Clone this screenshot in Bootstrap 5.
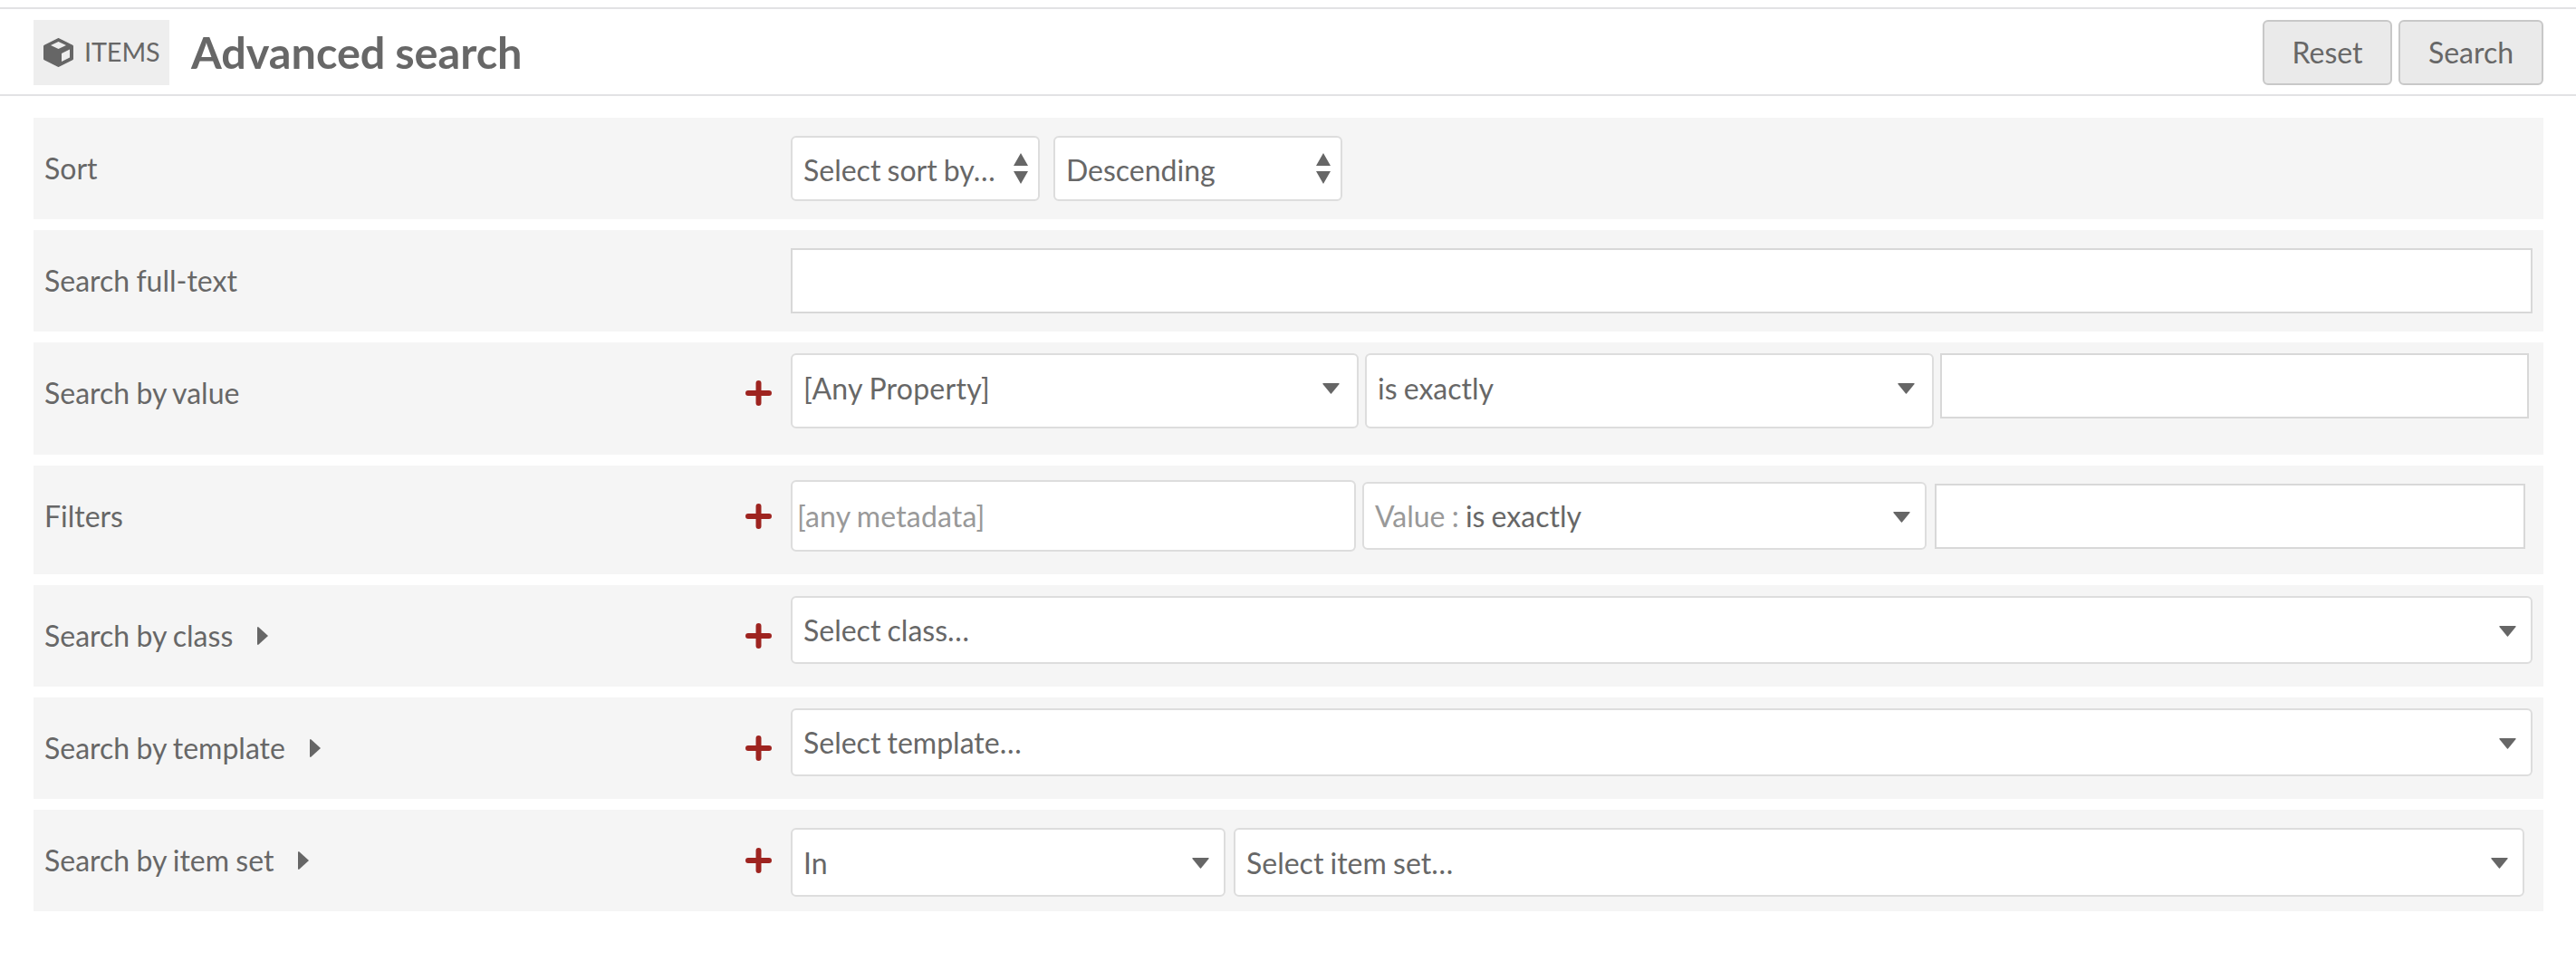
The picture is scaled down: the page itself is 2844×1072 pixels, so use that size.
<!DOCTYPE html>
<html lang="en"><head><meta charset="utf-8"><title>Advanced search</title>
<link href="https://cdn.jsdelivr.net/npm/bootstrap@5.3.0/dist/css/bootstrap.min.css" rel="stylesheet">
<style>
:root{--ink:#676767;--sel:url("data:image/svg+xml,%3Csvg xmlns='http://www.w3.org/2000/svg' viewBox='0 0 19 12'%3E%3Cpath d='M1 0h17q1 0 .6 1L10 11.500q-.5.500-1 0L.4 1Q0 0 1 0z' fill='%23666'/%3E%3C/svg%3E");--ud:url("data:image/svg+xml,%3Csvg xmlns='http://www.w3.org/2000/svg' viewBox='0 0 16 34'%3E%3Cpath d='M8 0l8 14H0zM0 20h16L8 34z' fill='%23666'/%3E%3C/svg%3E")}
html,body{background:#fff}
body{font-family:Lato,"Liberation Sans",sans-serif;font-size:32px;color:var(--ink);padding-top:8px;min-height:1072px;overflow:hidden;word-spacing:-1px}
.headbar{border-top:2px solid #e2e2e4;border-bottom:2px solid #e2e2e4;height:98px;padding:12px 36px 0 37px}
.crumb{height:72px;width:150px;background:#eee;font-size:28.800px;padding-left:11px;gap:12px}
.crumb span{margin-left:0;letter-spacing:-.1px}
.pagetitle{font-size:48.600px;font-weight:700;margin:0 0 0 24px;color:var(--ink);line-height:70px}
.actbtn{height:72px;background:#eaeaea;border:2px solid #c8c8c8;border-radius:6px;color:var(--ink);padding:0;font-size:32px;line-height:68px}
.actbtn:hover{background:#e2e2e2;color:var(--ink);border-color:#c8c8c8}
.w-reset{width:143px}.w-search{width:160px;margin-left:7px}
.rowlist{margin:24px 36px 0 37px;gap:12px}
.srow{background:#f5f5f5;height:112px;padding-left:12px}
.srow.tall-a{height:124px}.srow.tall-b{height:120px}
.rowhead{width:824px;flex:none;height:100%;padding-right:21px}
.rowhead.up-6{padding-bottom:12px}
.rowhead.up-4{padding-bottom:8px}
.tri{margin-left:27px;flex:none}
.plusmark{margin-left:auto;flex:none}
.fbox{border:2px solid #ddd;border-radius:6px;background-color:#fff;color:var(--ink);font-size:32px;box-shadow:none;font-family:inherit;line-height:normal;word-spacing:-1px}
.form-select.fbox{background-size:19px 12px;background-position:right 16px top 31px;background-image:var(--sel);padding:0 40px 0 12px;border-color:#ddd;color:var(--ink)}
.form-select.updn{background-image:var(--ud);background-size:16px 34px;background-position:right 11px center;height:72px;padding-top:2px}
.form-control.plain{border-radius:0;border-color:#d8d8d8;height:72px;padding:0 12px}
.form-control.lookup{padding:0 5px;height:79px;width:624px;flex:none;letter-spacing:.15px}
.lookup::placeholder{color:#999;opacity:1}
.mutedtxt{color:#999}
.w-sort{width:275px;flex:none}.w-dir{width:319px;flex:none;margin-left:15px}
.w-full{width:1923px;flex:none}
.form-select.fbox.w-prop,.form-select.fbox.w-op{background-position:right 19px top 31px;padding-bottom:6px}
.w-prop{width:627px;height:83px;flex:none;letter-spacing:.25px}
.w-op{width:628px;height:83px;flex:none;margin-left:7px}
.w-val{width:650px;flex:none;margin-left:7px}
.ctl-top{padding-top:12px}
.ctl-f{padding-top:16px}
.ctl-s{padding-top:12px}
.ctl-i{padding-top:20px}
.w-fop{width:623px;height:75px;flex:none;margin:2px 0 0 7px;line-height:71px}
.w-fval{width:652px;flex:none;margin:4px 0 0 9px}
.w-wide{width:1923px;height:75px;flex:none}
.w-in{width:480px;height:76px;flex:none}
.w-set{width:1425px;height:76px;flex:none;margin-left:9px}
</style></head><body>
<header class="headbar d-flex align-items-start">
 <div class="crumb d-flex align-items-center">
  <svg width="33" height="32" viewBox="0 0 33 32"><path d="M16.500 1.500L31.500 9v14L16.500 30.500 1.500 23V9z" fill="#666" stroke="#666" stroke-width="3" stroke-linejoin="round"/><path d="M8 8l8.500-4L25 8l-8.500 4z" fill="#eee"/><path d="M20 17l9-4.500v9L20 26z" fill="#eee"/></svg>
  <span>ITEMS</span>
 </div>
 <h1 class="pagetitle">Advanced search</h1>
 <div class="ms-auto d-flex">
  <button type="button" class="btn actbtn w-reset">Reset</button>
  <button type="button" class="btn actbtn w-search">Search</button>
 </div>
</header>
<main class="rowlist d-flex flex-column">

 <section class="srow d-flex">
  <div class="rowhead d-flex align-items-center"><span>Sort</span></div>
  <div class="d-flex align-items-center">
   <select class="form-select fbox updn w-sort"><option>Select sort by…</option></select>
   <select class="form-select fbox updn w-dir"><option>Descending</option></select>
  </div>
 </section>

 <section class="srow d-flex">
  <div class="rowhead d-flex align-items-center"><span>Search full-text</span></div>
  <div class="d-flex align-items-center"><input type="text" class="form-control fbox plain w-full" aria-label="Search full-text"></div>
 </section>

 <section class="srow tall-a d-flex">
  <div class="rowhead up-6 d-flex align-items-center"><span>Search by value</span>
   <svg class="plusmark" width="29" height="28" viewBox="0 0 29 28"><path d="M14.500 3v22M3 14h23" stroke="#9e2420" stroke-width="6" stroke-linecap="round"/></svg></div>
  <div class="d-flex align-items-start ctl-top">
   <select class="form-select fbox w-prop"><option>[Any Property]</option></select>
   <select class="form-select fbox w-op"><option>is exactly</option></select>
   <input type="text" class="form-control fbox plain w-val" aria-label="Value">
  </div>
 </section>

 <section class="srow tall-b d-flex">
  <div class="rowhead up-4 d-flex align-items-center"><span>Filters</span>
   <svg class="plusmark" width="29" height="28" viewBox="0 0 29 28"><path d="M14.500 3v22M3 14h23" stroke="#9e2420" stroke-width="6" stroke-linecap="round"/></svg></div>
  <div class="d-flex align-items-start ctl-f">
   <input type="text" class="form-control fbox lookup" placeholder="[any metadata]" aria-label="Metadata">
   <div class="form-select fbox w-fop"><span class="mutedtxt">Value : </span>is exactly</div>
   <input type="text" class="form-control fbox plain w-fval" aria-label="Filter value">
  </div>
 </section>

 <section class="srow d-flex">
  <div class="rowhead d-flex align-items-center"><span>Search by class</span>
   <svg class="tri" width="12" height="20" viewBox="0 0 12 20"><path d="M1 0l11 10L1 20q-1 0-1-1V1q0-1 1-1z" fill="#666"/></svg>
   <svg class="plusmark" width="29" height="28" viewBox="0 0 29 28"><path d="M14.500 3v22M3 14h23" stroke="#9e2420" stroke-width="6" stroke-linecap="round"/></svg></div>
  <div class="d-flex align-items-start ctl-s">
   <select class="form-select fbox w-wide"><option>Select class…</option></select>
  </div>
 </section>

 <section class="srow d-flex">
  <div class="rowhead d-flex align-items-center"><span>Search by template</span>
   <svg class="tri" width="12" height="20" viewBox="0 0 12 20"><path d="M1 0l11 10L1 20q-1 0-1-1V1q0-1 1-1z" fill="#666"/></svg>
   <svg class="plusmark" width="29" height="28" viewBox="0 0 29 28"><path d="M14.500 3v22M3 14h23" stroke="#9e2420" stroke-width="6" stroke-linecap="round"/></svg></div>
  <div class="d-flex align-items-start ctl-s">
   <select class="form-select fbox w-wide"><option>Select template…</option></select>
  </div>
 </section>

 <section class="srow d-flex">
  <div class="rowhead d-flex align-items-center"><span>Search by item set</span>
   <svg class="tri" width="12" height="20" viewBox="0 0 12 20"><path d="M1 0l11 10L1 20q-1 0-1-1V1q0-1 1-1z" fill="#666"/></svg>
   <svg class="plusmark" width="29" height="28" viewBox="0 0 29 28"><path d="M14.500 3v22M3 14h23" stroke="#9e2420" stroke-width="6" stroke-linecap="round"/></svg></div>
  <div class="d-flex align-items-start ctl-i">
   <select class="form-select fbox w-in"><option>In</option></select>
   <select class="form-select fbox w-set"><option>Select item set…</option></select>
  </div>
 </section>
</main>
</body></html>
